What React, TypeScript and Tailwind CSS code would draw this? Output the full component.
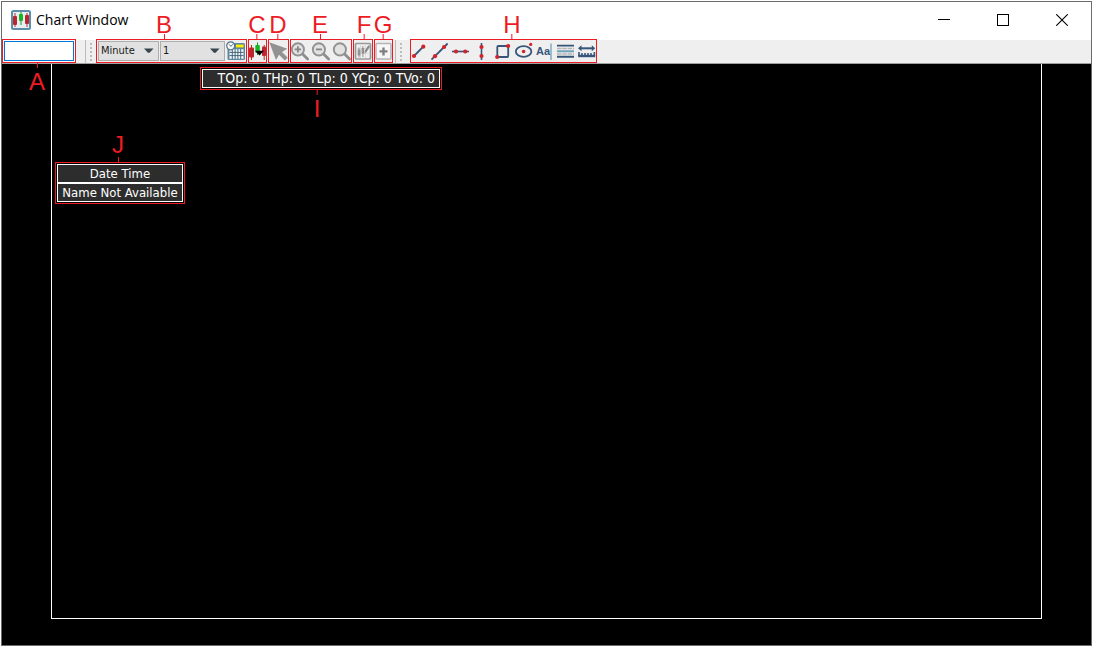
import type { ReactNode } from "react";

const NAVY = "#35557a";
const RED = "#d2232a";

function Callout({ letter, side, className }: { letter: string; side: "above" | "below"; className: string }) {
  const place =
    side === "above"
      ? "absolute bottom-full mb-px flex -translate-x-1/2 flex-col items-center"
      : "absolute top-full mt-px flex -translate-x-1/2 flex-col-reverse items-center gap-[5px]";
  return (
    <div className={`${place} pointer-events-none z-10 ${className}`}>
      <span className="font-['Liberation_Sans',sans-serif] text-[24px] leading-[18px] text-[#ed1c24]">{letter}</span>
      <span className="h-[5px] w-px bg-[#ed1c24]" />
    </div>
  );
}

function Group({ className, children }: { className?: string; children: ReactNode }) {
  return (
    <div className={`relative -mt-px flex h-6 items-center border border-[#ed1c24] ${className ?? ""}`}>{children}</div>
  );
}

function Tool({ label, width, children }: { label: string; width: number; children: ReactNode }) {
  return (
    <button type="button" aria-label={label} className="block shrink-0">
      <svg width={width} height="20" viewBox={`0 0 ${width} 20`} className="block overflow-visible" fill="none">
        {children}
      </svg>
    </button>
  );
}

function Combo({ label, options, className }: { label: string; options: string[]; className: string }) {
  return (
    <div className={`relative ${className}`}>
      <select
        aria-label={label}
        className="block h-5 w-full appearance-none border border-[#adadad] bg-[#e1e1e1] pl-[2px] font-['DejaVu_Sans_Condensed','DejaVu_Sans',sans-serif] text-[11px] leading-4 text-[#1a1a1a]"
      >
        {options.map((o) => (
          <option key={o}>{o}</option>
        ))}
      </select>
      <svg width="10" height="6" viewBox="0 0 10 6" className="pointer-events-none absolute top-[7px] right-[5px]">
        <path d="M0 0.5h9.5L5.6 4.8h-1.7z" fill="#37474f" />
      </svg>
    </div>
  );
}

function Grip() {
  return (
    <div className="flex h-full items-center gap-1">
      <span className="h-full w-px bg-[#bdbdbd]" />
      <svg width="2" height="18" viewBox="0 0 2 18">
        {[0, 4, 8, 12, 16].map((y) => (
          <rect key={y} y={y} width="2" height="2" fill="#bcbcbc" />
        ))}
      </svg>
    </div>
  );
}

function Dot({ x, y, r = 2.1 }: { x: number; y: number; r?: number }) {
  return <circle cx={x} cy={y} r={r} fill={RED} />;
}

function Magnifier({ sign }: { sign?: string }) {
  return (
    <>
      <path d="M11.3 12.8L16.6 18" stroke="#8d8d8d" strokeWidth="2.8" strokeLinecap="round" />
      <circle cx="6.9" cy="8.4" r="6.1" fill="#e2e2e2" stroke="#929292" strokeWidth="1.9" />
      {sign && <path d={sign} stroke="#858585" strokeWidth="1.8" />}
    </>
  );
}

function AppIcon() {
  return (
    <svg width="20" height="20" viewBox="0 0 20 20">
      <rect x="1" y="1" width="18" height="18" rx="1.5" fill="#e9eef0" stroke="#5c8ea8" strokeWidth="2" />
      <path d="M4 3v14M16 3v14" stroke="#b83038" strokeWidth="1" />
      <path d="M10 2v13" stroke="#169b22" strokeWidth="1" />
      <rect x="2" y="6" width="4" height="9" rx="1" fill="#b9262f" />
      <rect x="8" y="4" width="4" height="7" rx="1" fill="#14b823" />
      <rect x="14" y="5" width="4" height="9" rx="1" fill="#b9262f" />
    </svg>
  );
}

function TitleBar() {
  return (
    <header className="flex h-[38px] items-center bg-white pb-[2px] pl-[9px]">
      <AppIcon />
      <h1 className="ml-[5px] flex-1 font-['Open_Sans',sans-serif] text-[14px] leading-5 text-black">Chart Window</h1>
      <button type="button" aria-label="Minimize" className="flex h-full w-[59px] items-center justify-center">
        <svg width="12" height="12" viewBox="0 0 12 12">
          <path d="M0 5.5h12" stroke="#000" />
        </svg>
      </button>
      <button type="button" aria-label="Maximize" className="flex h-full w-[59px] items-center justify-center">
        <svg width="12" height="12" viewBox="0 0 12 12" fill="none">
          <rect x="0.5" y="0.5" width="11" height="11" stroke="#000" />
        </svg>
      </button>
      <button type="button" aria-label="Close" className="flex h-full w-[59px] items-center justify-center">
        <svg width="12" height="12" viewBox="0 0 12 12">
          <path d="M0.2 0.2l11.6 11.6M11.8 0.2L0.2 11.8" stroke="#000" strokeWidth="1.1" />
        </svg>
      </button>
    </header>
  );
}

function DrawingTools() {
  return (
    <Group className="ml-2 gap-1">
      <Tool label="Line" width={17}>
        <path d="M3 15L12.3 5.7" stroke={NAVY} strokeWidth="1.8" />
        <Dot x={3} y={15} />
        <Dot x={12.3} y={5.7} />
      </Tool>
      <Tool label="Extended line" width={17}>
        <path d="M-0.5 18.7L15.6 2.5" stroke={NAVY} strokeWidth="1.8" />
        <Dot x={3} y={15.2} />
        <Dot x={12.1} y={6} />
      </Tool>
      <Tool label="Horizontal line" width={17}>
        <path d="M-1 10.5H16" stroke={NAVY} strokeWidth="1.6" />
        <Dot x={3} y={10.5} />
        <Dot x={12.2} y={10.5} />
      </Tool>
      <Tool label="Vertical line" width={17}>
        <path d="M7.5 2V19" stroke={NAVY} strokeWidth="1.6" />
        <Dot x={7.5} y={6} />
        <Dot x={7.5} y={15} />
      </Tool>
      <Tool label="Rectangle" width={17}>
        <rect x="2.3" y="5" width="10.9" height="11" rx="1" stroke={NAVY} strokeWidth="1.8" />
        <Dot x={13.1} y={5} />
        <Dot x={2.2} y={16} />
      </Tool>
      <Tool label="Ellipse" width={17}>
        <ellipse cx="7.6" cy="10.5" rx="7.8" ry="5.3" stroke={NAVY} strokeWidth="1.8" />
        <Dot x={7.6} y={10.5} r={1.8} />
        <Dot x={14.7} y={3.4} r={1.6} />
      </Tool>
      <Tool label="Text" width={17}>
        <text x="-1" y="14" fontSize="11" fontWeight="700" fontFamily="Liberation Sans, sans-serif" fill={NAVY}>
          Aa
        </text>
        <path d="M14 2.5V19" stroke="#6ba3bc" strokeWidth="1.3" />
      </Tool>
      <Tool label="Levels" width={17}>
        <path d="M-1 4.6H16M-1 15.8H16" stroke={NAVY} strokeWidth="1.9" />
        <path d="M-1 7.5H16M-1 13H16" stroke="#b5b5b5" strokeWidth="1.7" strokeDasharray="4.5 0.8" />
        <path d="M-1 10.3H16" stroke="#6ba3bc" strokeWidth="2" />
      </Tool>
      <Tool label="Ruler" width={17}>
        <path d="M1 7.3H14" stroke={NAVY} strokeWidth="2" />
        <path d="M-1 7.3L2.5 4.3v6zM16.2 7.3L12.8 4.3v6z" fill={NAVY} />
        <path d="M-0.8 15H16.2" stroke={NAVY} strokeWidth="2.4" />
        <path d="M0 11v4M3 12v3M6 12v3M9 12v3M12 12v3M15.4 11v4" stroke={NAVY} strokeWidth="1.6" />
      </Tool>
      <Callout letter="H" side="above" className="left-[101px]" />
    </Group>
  );
}

function Toolbar() {
  return (
    <nav aria-label="Chart tools" className="flex h-6 border-b border-[#a0a0a0] bg-[#efefef]">
      <Group className="w-[74px] bg-white p-px">
        <input aria-label="Symbol" className="block h-5 w-full min-w-0 border border-[#0078d7] bg-white px-1 text-[11px] outline-none" />
        <Callout letter="A" side="below" className="left-[34px]" />
      </Group>
      <div className="ml-[9px] h-full">
        <Grip />
      </div>
      <Group className="ml-1 gap-px pl-px">
        <Combo label="Period" options={["Minute", "Hour", "Day"]} className="w-[61px]" />
        <Combo label="Interval" options={["1", "5", "15"]} className="w-[65px]" />
        <Tool label="Date range" width={20}>
          <rect x="1.5" y="2" width="17.5" height="17" rx="1.5" fill="#5c87a2" />
          <rect x="3.5" y="8.2" width="14" height="9.6" fill="#f3f6f7" />
          <rect x="10" y="3.6" width="7.6" height="2.8" fill="#ffeb00" />
          <path d="M3.5 11.4h14M3.5 14.6h14M6.3 8v10M9.1 8v10M11.9 8v10M14.7 8v10" stroke="#45677d" />
          <circle cx="4.7" cy="4.8" r="4" fill="#f7f7f7" stroke="#54738a" strokeWidth="1.2" />
          <path d="M3.3 3.5L4.8 5.4L6.9 3.2" stroke="#4b5d6a" strokeWidth="0.9" />
        </Tool>
        <Callout letter="B" side="above" className="left-[67px]" />
      </Group>
      <Group className="ml-px">
        <Tool label="Chart style" width={17}>
          <path d="M2.5 4v15M15.2 4v15" stroke="#b9262f" />
          <path d="M8.5 1.5V14" stroke="#169b22" />
          <rect x="0" y="6.5" width="5" height="10" rx="1" fill="#b9262f" />
          <rect x="6.3" y="4" width="4.5" height="8" rx="1" fill="#14b823" />
          <rect x="13" y="5.5" width="4" height="9.5" rx="1" fill="#b9262f" />
          <path d="M6 9.7H15L10.5 14.6z" fill="#000" />
        </Tool>
        <Callout letter="C" side="above" className="left-[8px]" />
      </Group>
      <Group className="ml-px">
        <Tool label="Pointer" width={19}>
          <path d="M0.3 1.2L18.3 7.8L13 11L18.8 16.8L15.8 19.6L10 13.8L7 19z" fill="#929292" />
        </Tool>
        <Callout letter="D" side="above" className="left-[9px]" />
      </Group>
      <Group className="ml-px gap-[3px]">
        <Tool label="Zoom in" width={18}>
          <Magnifier sign="M3.7 8.4H10.1M6.9 5.2V11.6" />
        </Tool>
        <Tool label="Zoom out" width={18}>
          <Magnifier sign="M3.9 8.4H9.9" />
        </Tool>
        <Tool label="Reset zoom" width={18}>
          <Magnifier />
        </Tool>
        <Callout letter="E" side="above" className="left-[29px]" />
      </Group>
      <Group className="ml-px">
        <Tool label="Edit studies" width={18}>
          <rect x="1.5" y="2.5" width="15" height="15.5" rx="1" fill="#f0f0f0" stroke="#999" strokeWidth="1.7" />
          <path d="M6.5 3.4v13.6M11.5 3.4v13.6M2.4 7.5h13.2M2.4 12.5h13.2" stroke="#dadada" />
          <path d="M5 6.5v10M8.9 5v11" stroke="#929292" />
          <rect x="3.7" y="8.5" width="2.7" height="6" fill="#929292" />
          <path d="M7.6 7h2.6v5.5H7.6z" fill="#929292" />
          <path d="M10.4 12.5L11 9.5L14.3 4.2L16 5.4L12.6 10.9z" fill="#888" />
        </Tool>
        <Callout letter="F" side="above" className="left-[10px]" />
      </Group>
      <Group className="ml-px">
        <Tool label="Add" width={17}>
          <rect x="1" y="2.5" width="15" height="15.5" rx="1" fill="#f7f7f7" stroke="#b5b5b5" strokeWidth="1.5" />
          <path d="M4.5 10.4H12.5M8.5 6.4V14.4" stroke="#808080" strokeWidth="2.4" />
        </Tool>
        <Callout letter="G" side="above" className="left-[8px]" />
      </Group>
      <div className="ml-[2px] h-full">
        <Grip />
      </div>
      <DrawingTools />
    </nav>
  );
}

export default function App() {
  return (
    <div className="flex min-h-screen bg-white p-px">
      <div className="flex flex-1 flex-col border border-[#6b6b6b]">
        <TitleBar />
        <Toolbar />
        <main className="flex flex-1 bg-black px-[49px] pb-[26px] font-['DejaVu_Sans_Condensed','DejaVu_Sans',sans-serif] text-white">
          <div className="relative flex-1 border-x border-b border-white">
            <div className="absolute top-[3px] left-[148px] border border-[#ed1c24] p-px">
              <p className="h-[19px] w-[238px] border border-white bg-[#2d2d2d] pr-1 text-right text-[14px] leading-[17px] whitespace-nowrap">
                TOp: 0 THp: 0 TLp: 0 YCp: 0 TVo: 0
              </p>
              <Callout letter="I" side="below" className="left-[116px]" />
            </div>
            <div className="absolute top-[98px] left-[3px] w-[130px] border border-[#ed1c24] p-px text-center text-[13px] leading-[17px] whitespace-nowrap">
              <p className="border border-white bg-[#2d2d2d]">Date Time</p>
              <p className="border border-white bg-[#2d2d2d]">Name Not Available</p>
              <Callout letter="J" side="above" className="left-[62px] gap-[3px]" />
            </div>
          </div>
        </main>
      </div>
    </div>
  );
}
